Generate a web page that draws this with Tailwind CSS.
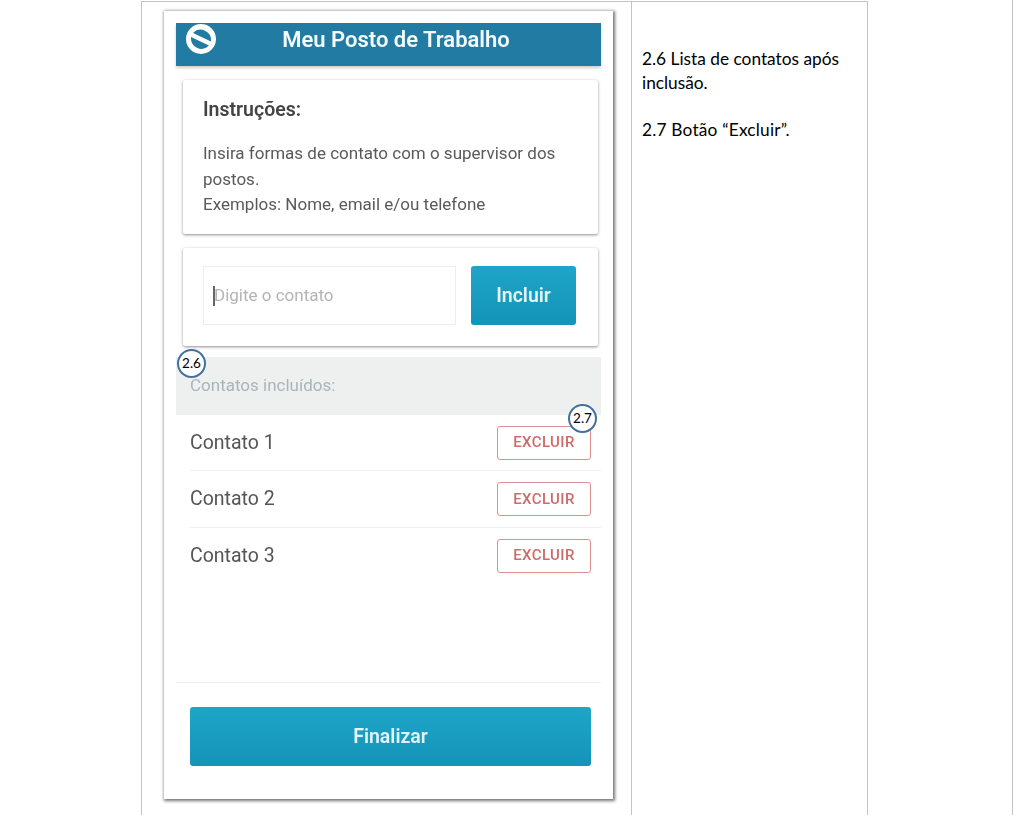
<!DOCTYPE html>
<html lang="pt">
<head>
<meta charset="utf-8">
<script src="https://cdn.jsdelivr.net/npm/@tailwindcss/browser@4"></script>
</head>
<body class="bg-white">
<div class="w-[1013px] h-[815px] overflow-hidden border-r border-[#c4c4c4] pl-[141px] pt-[1px]">
  <div class="flex w-[727px] h-[814px] border-t border-l border-r border-[#c4c4c4]">
    <div class="w-[490px] shrink-0 border-r border-[#c4c4c4] pl-[22px] pt-[9px]">
      <div class="relative w-[449px] h-[788px] bg-white px-[12px] pt-[12px] pb-[33px] flex flex-col shadow-[1px_1px_3px_1px_rgba(0,0,0,0.55)] font-['Roboto',sans-serif]">
        <header class="h-[43px] bg-[#217ba3] shadow-[0_2px_3px_rgba(0,0,0,0.2)] relative flex justify-center pt-[3px] pl-[15px] text-[#f4fbfd] text-[22px] leading-[27px] font-semibold blur-[0.6px]">
          <svg class="absolute left-[9px] top-0 w-[32px] h-[32px]" viewBox="0 0 32 32">
            <circle cx="16" cy="16" r="15" fill="#fff"/>
            <path d="M8 10 A10.5 10.5 0 0 1 26 18.5 Z" fill="#217ba3"/>
            <path d="M6 14 A10.5 10.5 0 0 0 24 22.5 Z" fill="#217ba3"/>
          </svg>
          <h1>Meu Posto de Trabalho</h1>
        </header>
        <section class="ml-[7px] mr-[3px] mt-[14px] h-[154px] bg-white rounded-[2px] shadow-[0_1px_3px_rgba(0,0,0,0.45)] px-[20px] pt-[18px] text-[#5a5a5a] blur-[0.5px]">
          <h2 class="text-[19.5px] leading-[24px] font-semibold text-[#444]">Instruções:</h2>
          <p class="mt-[19px] text-[17px] leading-[25.5px]">Insira formas de contato com o supervisor dos postos.<br>Exemplos: Nome, email e/ou telefone</p>
        </section>
        <section class="ml-[7px] mr-[3px] mt-[14px] h-[98px] shrink-0 bg-white rounded-[2px] shadow-[0_1px_3px_rgba(0,0,0,0.45)] pl-[20px] pt-[18px] flex items-start gap-[15px] blur-[0.5px]">
          <div class="w-[253px] h-[59px] border border-[#eeeeee] pl-[9px] flex items-center text-[17px] text-[#b4b4b4]">
            <span class="w-[2px] h-[20px] bg-[#666] -mr-[1px]"></span><span>Digite o contato</span>
          </div>
          <button class="w-[105px] h-[59px] rounded-[3px] bg-gradient-to-b from-[#1ea5c7] to-[#1394b8] text-[#e4f5fa] text-[19.5px] font-semibold">Incluir</button>
        </section>
        <div class="mt-[11px] h-[58px] shrink-0 bg-[#eef0f0] pl-[14px] pt-[16px] text-[17px] leading-[24px] text-[#a9b5b9] blur-[0.5px]">Contatos incluídos:</div>
        <ul class="text-[19.5px] text-[#555]">
          <li class="h-[56px] ml-[14px] border-b border-[#f0f0f0] flex items-center justify-between pr-[10px] blur-[0.5px]">
            <span>Contato 1</span>
            <button class="w-[94px] h-[34px] rounded-[3px] border-[1.5px] border-[#de8f8f] text-[15px] font-medium tracking-[0.4px] text-[#cf6a6a]">EXCLUIR</button>
          </li>
          <li class="h-[57px] ml-[14px] border-b border-[#f0f0f0] flex items-center justify-between pr-[10px] blur-[0.5px]">
            <span>Contato 2</span>
            <button class="w-[94px] h-[34px] rounded-[3px] border-[1.5px] border-[#de8f8f] text-[15px] font-medium tracking-[0.4px] text-[#cf6a6a]">EXCLUIR</button>
          </li>
          <li class="h-[55px] ml-[14px] flex items-center justify-between pr-[10px] blur-[0.5px]">
            <span class="pt-[1px]">Contato 3</span>
            <button class="w-[94px] h-[34px] rounded-[3px] border-[1.5px] border-[#de8f8f] text-[15px] font-medium tracking-[0.4px] text-[#cf6a6a]">EXCLUIR</button>
          </li>
        </ul>
        <footer class="mt-auto border-t border-[#f0f0f0] pt-[24px] px-[14px]">
          <button class="w-[401px] h-[59px] rounded-[3px] bg-gradient-to-b from-[#1ea5c7] to-[#1394b8] text-[#e4f5fa] text-[19.5px] font-semibold blur-[0.5px]">Finalizar</button>
        </footer>
        <div class="absolute left-[13px] top-[338px] w-[29px] h-[29px] rounded-full border-2 border-[#41719c] bg-white flex items-center justify-center font-['Lato',sans-serif] text-[13.5px] text-black">2.6</div>
        <div class="absolute left-[404px] top-[393px] w-[29px] h-[29px] rounded-full border-2 border-[#41719c] bg-white flex items-center justify-center font-['Lato',sans-serif] text-[13.5px] text-black">2.7</div>
      </div>
    </div>
    <aside class="flex-1 pl-[10px] pt-[45px] font-['Lato',sans-serif] text-[17.3px] leading-[23.5px] text-black">
      <p>2.6 Lista de contatos após<br>inclusão.</p>
      <p class="mt-[23.5px] tracking-[0.2px]">2.7 Botão “Excluir”.</p>
    </aside>
  </div>
</div>
</body>
</html>
